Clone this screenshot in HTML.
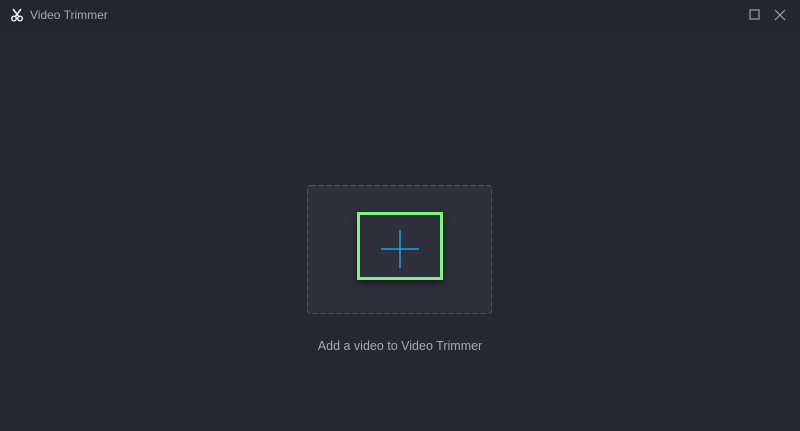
<!DOCTYPE html>
<html><head><style>
body{margin:0;width:800px;height:431px;background:#26272f;font-family:"Liberation Sans",sans-serif;position:relative;overflow:hidden}
.tb{position:absolute;left:0;top:0;width:800px;height:30px;background:#24252d}
.title{position:absolute;left:30px;top:8px;font-size:12px;color:#a8a9b0}
.drop{position:absolute;left:307px;top:185px;width:185px;height:129px;background:#2f303b;border-radius:3px}
.g{position:absolute;left:357px;top:212px;width:80px;height:62px;border:3px solid #7bf57a;box-shadow:0 3px 8px rgba(0,0,0,.5);background:#2f303b}
.cap{position:absolute;left:0;width:800px;top:339px;text-align:center;font-size:12.5px;color:#a8a9b0}
</style></head><body>
<div class="tb"></div>
<svg style="position:absolute;left:10px;top:8px" width="14" height="14" viewBox="0 0 14 14"><path d="M3 1 L9 9 M11 1 L5 9" stroke="#eee" stroke-width="1.6" fill="none"/><circle cx="4" cy="10.5" r="2.3" stroke="#eee" stroke-width="1.5" fill="none"/><circle cx="10" cy="10.5" r="2.3" stroke="#eee" stroke-width="1.5" fill="none"/></svg>
<div class="title">Video Trimmer</div>
<svg style="position:absolute;left:749px;top:9px" width="12" height="12"><rect x="1" y="1" width="9" height="9" stroke="#a0a1a8" fill="none" stroke-width="1.2"/></svg>
<svg style="position:absolute;left:774px;top:9px" width="12" height="12"><path d="M1 1L11 11M11 1L1 11" stroke="#a0a1a8" stroke-width="1.2"/></svg>
<div class="drop"></div>
<svg style="position:absolute;left:307px;top:185px" width="185" height="129"><rect x="0.5" y="0.5" width="184" height="128" rx="3" fill="none" stroke="#55565f" stroke-dasharray="5 3"/></svg>
<div class="g"></div>
<svg style="position:absolute;left:380px;top:229px" width="40" height="40"><path d="M1 20H39M20 1V39" stroke="#1aa3e8" stroke-width="1.5"/></svg>
<div class="cap">Add a video to Video Trimmer</div>
</body></html>
